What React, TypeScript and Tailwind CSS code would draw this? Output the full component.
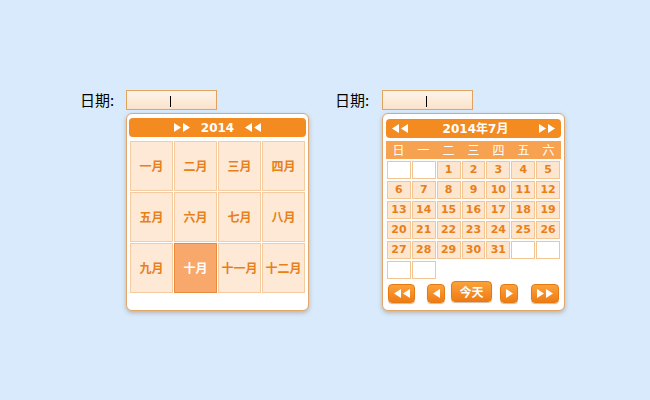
import React from 'react';

const months = ['一月', '二月', '三月', '四月', '五月', '六月', '七月', '八月', '九月', '十月', '十一月', '十二月'];
const weekdays = ['日', '一', '二', '三', '四', '五', '六'];

// July 2014 starts on Tuesday; null = empty bordered cell, undefined = nothing
const days: (number | null | undefined)[] = [
  null, null, 1, 2, 3, 4, 5,
  6, 7, 8, 9, 10, 11, 12,
  13, 14, 15, 16, 17, 18, 19,
  20, 21, 22, 23, 24, 25, 26,
  27, 28, 29, 30, 31, null, null,
  null, null, undefined, undefined, undefined, undefined, undefined,
];

const cjk = { fontFamily: '"Noto Sans CJK SC", "DejaVu Sans", sans-serif' };
const num = { fontFamily: '"DejaVu Sans", "Noto Sans CJK SC", sans-serif' };

function Tri({ dir }: { dir: 'l' | 'r' }) {
  return (
    <svg width="7" height="9" viewBox="0 0 7 9" className="block">
      {dir === 'r' ? <path d="M0 0 L7 4.5 L0 9 Z" fill="white" /> : <path d="M7 0 L0 4.5 L7 9 Z" fill="white" />}
    </svg>
  );
}

function Arrows({ dir, n = 2 }: { dir: 'l' | 'r'; n?: number }) {
  return (
    <span className="flex items-center gap-[2px]">
      {Array.from({ length: n }).map((_, i) => (
        <Tri key={i} dir={dir} />
      ))}
    </span>
  );
}

function DateInput() {
  return (
    <div className="relative h-[20px] w-[91px] border border-[#e0a45e] bg-gradient-to-b from-[#fdf4ec] to-[#fbe2c9]">
      <span className="absolute left-[43px] top-[5px] h-[11px] w-px bg-black" />
    </div>
  );
}

function Label({ w }: { w: string }) {
  return (
    <div className={`flex h-[20px] items-center text-[15px] text-black ${w}`} style={cjk}>
      日期:
    </div>
  );
}

function MonthPicker() {
  return (
    <div className="mt-[3px] h-[198px] w-[183px] rounded-[6px] border border-[#e2a66c] bg-white px-[2px] pt-[4px] shadow-[0_2px_4px_rgba(120,80,40,0.35)]">
      <div className="flex h-[19px] items-center justify-center gap-[11px] rounded-[4px] bg-[#f38b20] text-[12px] font-bold text-white" style={num}>
        <Arrows dir="r" />
        <span>2014</span>
        <Arrows dir="l" />
      </div>
      <div className="mx-px mt-[4px] grid grid-cols-4 gap-px">
        {months.map((m) => {
          const sel = m === '十月';
          return (
            <div
              key={m}
              className={
                sel
                  ? 'flex h-[50px] items-center justify-center border border-[#e98a3c] bg-[#f9a86b] text-[12px] font-bold text-white'
                  : 'flex h-[50px] items-center justify-center border border-[#f5cc9f] bg-[#fde9d5] text-[12px] font-bold text-[#e8801a]'
              }
              style={cjk}
            >
              {m}
            </div>
          );
        })}
      </div>
    </div>
  );
}

function Btn({ w, children, tall }: { w: string; children: React.ReactNode; tall?: boolean }) {
  return (
    <div
      className={`flex items-center justify-center rounded-[4px] border border-[#e57a12] bg-gradient-to-b from-[#fba23a] to-[#ef7b12] shadow-[0_1px_1px_rgba(150,80,20,0.4)] ${w} ${tall ? 'h-[21px]' : 'h-[19px]'}`}
    >
      {children}
    </div>
  );
}

function DayPicker() {
  return (
    <div className="mt-[3px] h-[198px] w-[183px] rounded-[6px] border border-[#e2a66c] bg-white px-[3px] pt-[5px] shadow-[0_2px_4px_rgba(120,80,40,0.35)]">
      <div className="flex h-[19px] items-center justify-between rounded-[4px] bg-[#f38b20] px-[6px] text-[12px] font-bold text-white" style={num}>
        <Arrows dir="l" />
        <span className="ml-[4px]" style={num}>
          2014<span style={cjk}>年</span>7<span style={cjk}>月</span>
        </span>
        <Arrows dir="r" />
      </div>
      <div className="mt-[3px] grid h-[18px] grid-cols-7 items-center bg-[#f7a251] text-[12px] text-white" style={cjk}>
        {weekdays.map((d) => (
          <span key={d} className="text-center">
            {d}
          </span>
        ))}
      </div>
      <div className="mx-px mt-[2px] grid grid-cols-7 gap-x-px gap-y-[2px]">
        {days.map((d, i) =>
          d === undefined ? (
            <div key={i} className="h-[18px]" />
          ) : d === null ? (
            <div key={i} className="h-[18px] border border-[#f3c592] bg-white" />
          ) : (
            <div
              key={i}
              className="flex h-[18px] items-center justify-center border border-[#f3c592] bg-[#fde6d0] text-[11px] font-bold text-[#e8801a]"
              style={num}
            >
              {d}
            </div>
          ),
        )}
      </div>
      <div className="mt-[2px] flex items-end px-[2px]">
        <Btn w="w-[28px]">
          <Arrows dir="l" />
        </Btn>
        <div className="ml-[12px]">
          <Btn w="w-[18px]">
            <Tri dir="l" />
          </Btn>
        </div>
        <div className="ml-[6px] mb-[1px]">
          <Btn w="w-[41px]" tall>
            <span className="text-[12px] font-bold text-white" style={cjk}>
              今天
            </span>
          </Btn>
        </div>
        <div className="ml-[8px]">
          <Btn w="w-[18px]">
            <Tri dir="r" />
          </Btn>
        </div>
        <div className="ml-[13px]">
          <Btn w="w-[28px]">
            <Arrows dir="r" />
          </Btn>
        </div>
      </div>
    </div>
  );
}

export default function App() {
  return (
    <div className="h-[400px] w-[650px] bg-[#d8eafb] pl-[80px] pt-[90px]">
      <div className="flex items-start gap-[26px]">
        <div className="flex items-start">
          <Label w="w-[46px]" />
          <div>
            <DateInput />
            <MonthPicker />
          </div>
        </div>
        <div className="flex items-start">
          <Label w="w-[47px]" />
          <div>
            <DateInput />
            <DayPicker />
          </div>
        </div>
      </div>
    </div>
  );
}
